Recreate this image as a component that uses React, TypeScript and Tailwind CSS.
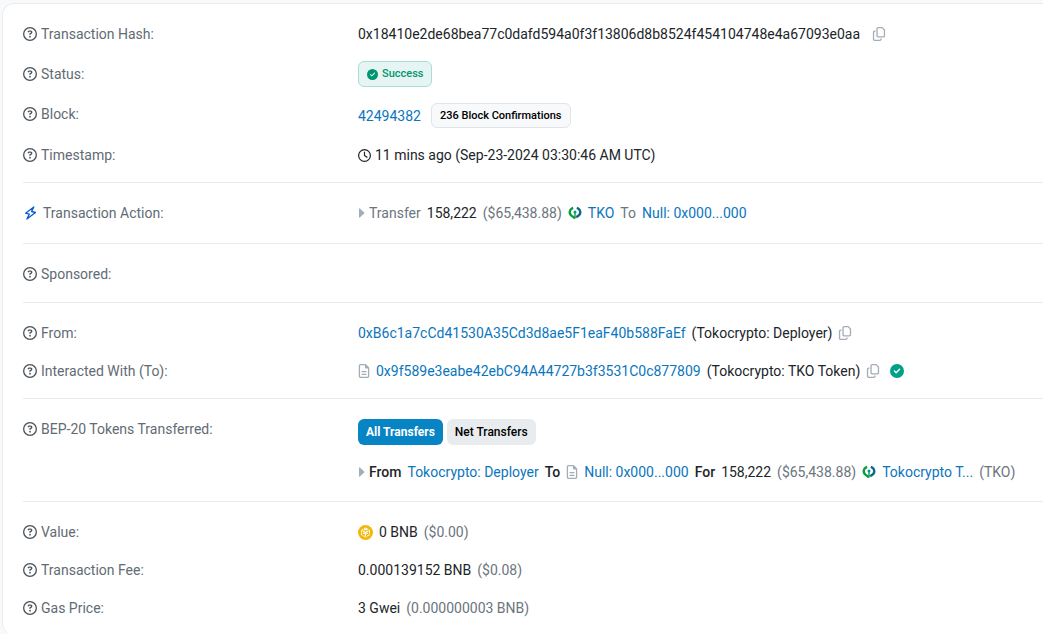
import React, { useState } from 'react';
import clsx from 'clsx';
import {
  FaCircleCheck,
  FaRegCircleQuestion,
  FaRegClock,
  FaRegCopy,
  FaRegFileLines,
} from 'react-icons/fa6';

const TRANSFER_TABS = ['All Transfers', 'Net Transfers'];

function BoltIcon() {
  return (
    <svg className="w-[14px] h-[14px]" viewBox="0 0 14 14" fill="none" stroke="#0a58ca" strokeWidth="1.3" strokeLinejoin="round">
      <path d="M10.8 1 2.6 7.2l3.7.9L3.9 13l8.6-6.5-3.9-1L10.8 1Z" />
    </svg>
  );
}

function CaretIcon() {
  return (
    <svg className="w-[7px] h-[10px] shrink-0" viewBox="0 0 7 10" fill="#a3adb7">
      <path d="M1 .8Q1 0 1.8.5L6.2 4.4Q6.8 5 6.2 5.6L1.8 9.5Q1 10 1 9.2Z" />
    </svg>
  );
}

function TkoIcon() {
  return (
    <svg className="w-[14px] h-[14px] shrink-0" viewBox="0 0 14 14" fill="none" strokeWidth="2.4">
      <path d="M5.2 1.8C1.2 3 .8 7.6 3.4 9.6L7 12.2" stroke="#0f9d3a" />
      <path d="M8.8 1.8c4 1.2 4.4 5.8 1.8 7.8L8.2 11.3" stroke="#0b6a8c" />
      <path d="M7 6v6.4" stroke="#0f9d3a" strokeWidth="1.4" />
      <circle cx="7" cy="6" r="1.5" fill="#0d8fa0" />
    </svg>
  );
}

function BnbIcon() {
  return (
    <svg className="w-[15px] h-[15px] shrink-0" viewBox="0 0 30 30" fill="none">
      <circle cx="15" cy="15" r="15" fill="#f0b90b" />
      <path d="m15 6 8 4.5v9L15 24l-8-4.5v-9L15 6Z" stroke="#fff" strokeWidth="2" strokeDasharray="7 1.5" />
      <path d="m9 11.5 6 3.5 6-3.5M15 15v7M10 16l3 1.8M20 16l-3 1.8M12 10l3-1.5 3 1.5" stroke="#fff" strokeWidth="2.2" />
    </svg>
  );
}

function CopyButton({ label }: { label: string }) {
  return (
    <button type="button" aria-label={label} className="text-[#a3adb7] cursor-pointer">
      <FaRegCopy className="w-[14px] h-[14px]" />
    </button>
  );
}

function TextLink({ children }: { children: React.ReactNode }) {
  return (
    <a href="#" className="text-[#0a76bd] hover:text-[#066a9c]">
      {children}
    </a>
  );
}

function Group({ children, className = 'pb-4' }: { children: React.ReactNode; className?: string }) {
  return (
    <dl className={clsx('flex flex-col gap-4 pt-[19px] border-t border-[#e9ecef] first:border-t-0', className)}>
      {children}
    </dl>
  );
}

type RowProps = {
  label: string;
  icon?: React.ReactNode;
  align?: string;
  children?: React.ReactNode;
};

function Row({ label, icon, align = 'items-start', children }: RowProps) {
  return (
    <div className={clsx('flex', align)}>
      <dt className={clsx('w-[335px] shrink-0 flex items-center text-[#626b74]', icon ? 'gap-1.5' : 'gap-1')}>
        {icon ?? <FaRegCircleQuestion className="w-[14px] h-[14px] text-[#495057]" />}
        {label}
      </dt>
      <dd className="flex-1 min-w-0 whitespace-nowrap">{children}</dd>
    </div>
  );
}

export default function App() {
  const [tab, setTab] = useState(TRANSFER_TABS[0]);

  return (
    <div className="min-h-screen overflow-hidden bg-[#f8f9fa] pt-[3px] pl-[2px] font-['Roboto',sans-serif] text-[14px] leading-[22px] text-[#212529]">
      <main className="bg-white border-l border-t border-[#e9ecef] rounded-l-xl pl-5 min-h-[calc(100vh-3px)]">
        <Group>
          <Row label="Transaction Hash:">
            <div className="flex items-center gap-3">
              <span>0x18410e2de68bea77c0dafd594a0f3f13806d8b8524f454104748e4a67093e0aa</span>
              <CopyButton label="Copy transaction hash" />
            </div>
          </Row>
          <Row label="Status:" align="items-center">
            <div className="flex">
              <span className="flex items-center gap-1 h-[26px] px-2 rounded-md border border-[#a6dfd3] bg-[#e6f5f3] text-[11px] font-medium text-[#00956f]">
                <FaCircleCheck className="w-[11px] h-[11px]" />
                Success
              </span>
            </div>
          </Row>
          <Row label="Block:">
            <div className="flex items-center gap-2.5">
              <TextLink>42494382</TextLink>
              <span className="flex items-center h-[25px] px-2 rounded-md border border-[#e1e4e8] bg-[#f8f9fa] text-[11px] font-medium text-black">
                236 Block Confirmations
              </span>
            </div>
          </Row>
          <Row label="Timestamp:">
            <div className="flex items-center gap-1">
              <FaRegClock className="w-[13px] h-[13px]" />
              <span>11 mins ago (Sep-23-2024 03:30:46 AM UTC)</span>
            </div>
          </Row>
        </Group>

        <Group className="pb-[19px]">
          <Row label="Transaction Action:" icon={<BoltIcon />}>
            <div className="flex items-center gap-1.5">
              <span className="flex items-center gap-1 text-[#6c757d]">
                <CaretIcon />
                Transfer
              </span>
              <span>158,222</span>
              <span className="text-[#6c757d]">($65,438.88)</span>
              <TkoIcon />
              <TextLink>TKO</TextLink>
              <span className="text-[#6c757d]">To</span>
              <TextLink>Null: 0x000...000</TextLink>
            </div>
          </Row>
        </Group>

        <Group className="pb-[17px]">
          <Row label="Sponsored:" />
        </Group>

        <Group>
          <Row label="From:">
            <div className="flex items-center gap-1.5">
              <TextLink>0xB6c1a7cCd41530A35Cd3d8ae5F1eaF40b588FaEf</TextLink>
              <span>(Tokocrypto: Deployer)</span>
              <CopyButton label="Copy sender address" />
            </div>
          </Row>
          <Row label="Interacted With (To):">
            <div className="flex items-center gap-1.5">
              <FaRegFileLines className="w-[12px] h-[14px] text-[#a3adb7]" />
              <TextLink>0x9f589e3eabe42ebC94A44727b3f3531C0c877809</TextLink>
              <span>(Tokocrypto: TKO Token)</span>
              <CopyButton label="Copy contract address" />
              <FaCircleCheck className="w-[14px] h-[14px] ml-1 text-[#00a186]" />
            </div>
          </Row>
        </Group>

        <Group className="pb-[18px]">
          <Row label="BEP-20 Tokens Transferred:">
            <div className="flex gap-1 pt-px">
              {TRANSFER_TABS.map((name) => (
                <button
                  key={name}
                  type="button"
                  onClick={() => setTab(name)}
                  className={clsx(
                    'h-[26px] px-2 rounded-md text-[12px] cursor-pointer',
                    tab === name ? 'bg-[#0784c3] text-white font-bold' : 'bg-[#e9ecef] text-black font-medium'
                  )}
                >
                  {name}
                </button>
              ))}
            </div>
            <div className="flex items-center gap-1.5 pt-4">
              <span className="flex items-center gap-1 font-medium">
                <CaretIcon />
                From
              </span>
              <TextLink>Tokocrypto: Deployer</TextLink>
              <span className="font-medium">To</span>
              <FaRegFileLines className="w-[12px] h-[14px] text-[#a3adb7]" />
              <TextLink>Null: 0x000...000</TextLink>
              <span className="font-medium">For</span>
              <span>158,222</span>
              <span className="text-[#6c757d]">($65,438.88)</span>
              <TkoIcon />
              <TextLink>Tokocrypto T...</TextLink>
              <span className="text-[#6c757d]">(TKO)</span>
            </div>
          </Row>
        </Group>

        <Group>
          <Row label="Value:">
            <div className="flex items-center gap-1.5">
              <BnbIcon />
              <span>0 BNB</span>
              <span className="text-[#6c757d]">($0.00)</span>
            </div>
          </Row>
          <Row label="Transaction Fee:">
            <div className="flex gap-1.5">
              <span>0.000139152 BNB</span>
              <span className="text-[#6c757d]">($0.08)</span>
            </div>
          </Row>
          <Row label="Gas Price:">
            <div className="flex gap-1.5">
              <span>3 Gwei</span>
              <span className="text-[#6c757d]">(0.000000003 BNB)</span>
            </div>
          </Row>
        </Group>
      </main>
    </div>
  );
}
